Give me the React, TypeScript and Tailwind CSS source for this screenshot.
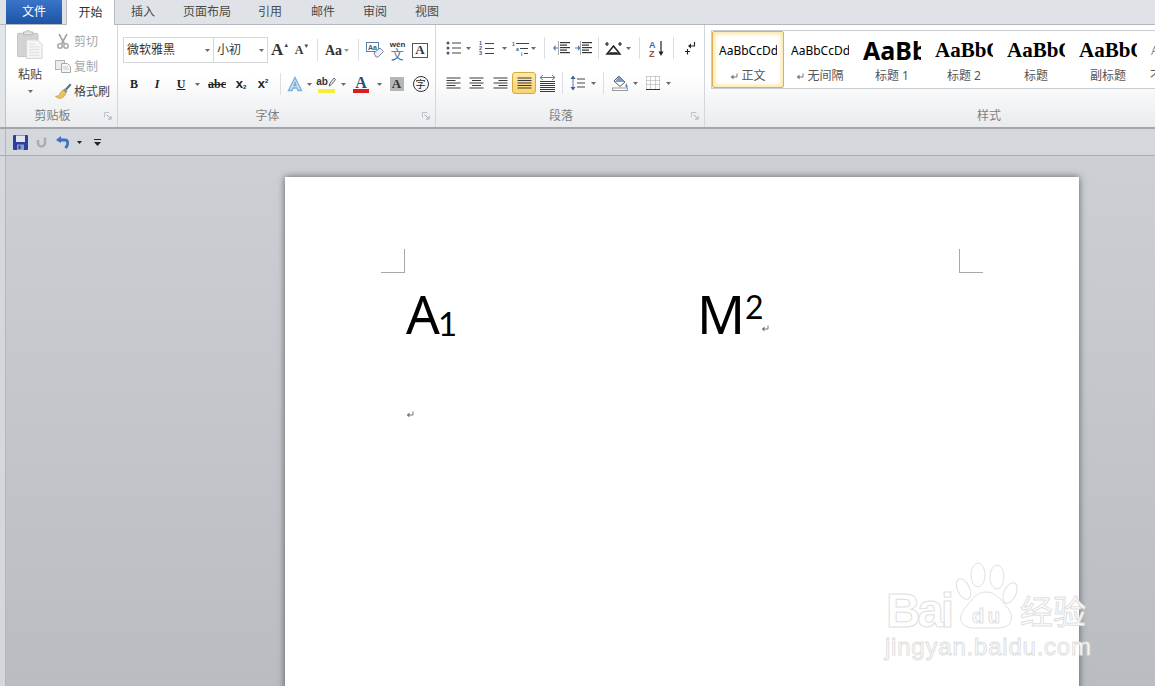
import React from "react";

// small dropdown arrow used all over the ribbon
const Caret = ({ c = "#6b6b6b" }: { c?: string }) => (
  <svg width="5" height="3" viewBox="0 0 5 3">
    <path d="M0 0h5L2.5 3z" fill={c} />
  </svg>
);

const Cell = ({ c, children }: { c: string; children?: React.ReactNode }) => (
  <div className={`flex shrink-0 h-full items-center justify-center ${c}`}>{children}</div>
);

const Dd = ({ c, color }: { c: string; color?: string }) => (
  <Cell c={c}>
    <Caret c={color} />
  </Cell>
);

const Sep = ({ c }: { c: string }) => (
  <Cell c={c}>
    <div className="w-px h-[22px] bg-[#dcdee1]" />
  </Cell>
);

const Launcher = () => (
  <svg width="8" height="8" viewBox="0 0 9 9">
    <path d="M.5 6V.5H6" fill="none" stroke="#b5b8bc" />
    <path d="M3 3l4 4M8 4.5V8H4.5" fill="none" stroke="#9aa5b3" />
  </svg>
);

// paragraph mark, the formatting symbol word shows at line ends
const ReturnMark = () => (
  <svg className="inline-block" width="8" height="7" viewBox="0 0 8 7">
    <path d="M7 .5V4H1.500" fill="none" stroke="#777" />
    <path d="M3.500 1.500L.8 4l2.700 2.500z" fill="#777" />
  </svg>
);

const Group = ({ label, c, row, children }: { label: string; c: string; row?: string; children: React.ReactNode }) => (
  <div className={`flex flex-col shrink-0 h-full border-r border-[#d3d6da] ${c}`}>
    <div className={`flex-1 min-h-0 ${row ?? ""}`}>{children}</div>
    <div className="flex items-center h-[24px] pt-[1px] text-[12px] text-[#7d7f82]">
      <div className="flex-1 text-center">{label}</div>
      <div className="w-[18px] flex justify-center">{label === "样式" ? null : <Launcher />}</div>
    </div>
  </div>
);

const Lines = ({ kind }: { kind: "l" | "c" | "r" | "j" | "d" }) => {
  const rows = [1, 3.5, 6, 8.5, 11];
  const w = (i: number) => (kind === "j" || kind === "d" ? 14 : i % 2 ? 9 : 14);
  const x = (i: number) => {
    if (kind === "l" || kind === "j" || kind === "d") return 0;
    if (kind === "c") return (14 - w(i)) / 2;
    return 14 - w(i);
  };
  return (
    <svg width="15" height="12" viewBox="0 0 15 12">
      {rows.map((y, i) => (
        <rect key={y} x={x(i) + 0.5} y={y - 0.5} width={w(i)} height="1" fill="#3a3a3a" />
      ))}
    </svg>
  );
};

const Bullets = () => (
  <svg width="15" height="14" viewBox="0 0 15 14">
    {[2, 7, 12].map((y) => (
      <g key={y}>
        <circle cx="2" cy={y} r="1.5" fill="#46566b" />
        <rect x="6" y={y - 0.5} width="9" height="1" fill="#444" />
      </g>
    ))}
  </svg>
);

const Numbers = () => (
  <svg width="15" height="15" viewBox="0 0 15 15">
    {[1, 6, 11].map((y, i) => (
      <g key={y}>
        <text x="0" y={y + 3} fontSize="5.5" fontWeight="700" fill="#3d5a80" fontFamily="Liberation Sans">
          {i + 1}
        </text>
        <rect x="6" y={y + 1} width="9" height="1" fill="#444" />
      </g>
    ))}
  </svg>
);

const Multi = () => (
  <svg width="18" height="15" viewBox="0 0 18 15">
    <text x="0" y="5" fontSize="5" fontWeight="700" fill="#3d5a80" fontFamily="Liberation Sans">1</text>
    <text x="4" y="10" fontSize="5" fontWeight="700" fill="#3d5a80" fontFamily="Liberation Sans">a</text>
    <text x="9" y="15" fontSize="5" fontWeight="700" fill="#3d5a80" fontFamily="Liberation Sans">i</text>
    <rect x="4" y="2" width="13" height="1" fill="#444" />
    <rect x="8" y="7" width="8" height="1" fill="#444" />
    <rect x="12" y="12" width="4" height="1" fill="#444" />
  </svg>
);

const Indent = ({ right }: { right?: boolean }) => (
  <svg width="17" height="14" viewBox="0 0 17 14">
    {[1, 3.5, 6, 8.5, 11].map((y) => (
      <rect key={y} x="7" y={y} width={y === 3.5 || y === 8.5 ? 7 : 10} height="1.2" fill="#333" />
    ))}
    <rect x="5" y="0" width="1" height="14" fill="#aaa" />
    {right ? (
      <path d="M0 6.500h3V4l2.500 3L3 10V7.500H0z" fill="#4d7fb8" />
    ) : (
      <path d="M5 6.500H2.500V4L0 7l2.500 3V7.500H5z" fill="#4d7fb8" />
    )}
  </svg>
);

const Para = () => (
  <svg width="17" height="14" viewBox="0 0 17 14">
    <path d="M2 13L8.500 5 15 13zM4.500 12h8" fill="none" stroke="#222" strokeWidth="1.500" />
    <path d="M0 3h4M2 1v4M13 3h4M15 1v4" stroke="#222" strokeWidth="1.200" />
  </svg>
);

const Sort = () => (
  <svg width="16" height="17" viewBox="0 0 16 17">
    <text x="0" y="8" fontSize="9" fontWeight="700" fill="#3a6ea5" fontFamily="Liberation Sans">A</text>
    <text x="0" y="16.500" fontSize="9" fontWeight="700" fill="#a04a45" fontFamily="Liberation Sans">Z</text>
    <path d="M12 1v13" stroke="#222" strokeWidth="1.200" />
    <path d="M9.500 11.500L12 16l2.500-4.500z" fill="#222" />
  </svg>
);

const Pilcrow = () => (
  <svg width="11" height="14" viewBox="0 0 11 14">
    <path d="M9.500 1v4H5" fill="none" stroke="#222" strokeWidth="1.100" />
    <path d="M6 2.500L3 5l3 2.500z" fill="#222" />
    <path d="M0 10.500h5M2.500 8v5.500" stroke="#222" strokeWidth="1.100" />
  </svg>
);

const Spacing = () => (
  <svg width="16" height="16" viewBox="0 0 16 16">
    <path d="M3 3v10" stroke="#4d7fb8" />
    <path d="M0.500 4L3 0.500 5.500 4zM0.500 12L3 15.500 5.500 12z" fill="#3d5f8a" />
    <path d="M7 4h8M7 8h8M7 12h8" stroke="#444" />
  </svg>
);

const Fill = () => (
  <svg width="17" height="16" viewBox="0 0 17 16">
    <path d="M7 1l6 6-5 4.500L2 6z" fill="#fff" stroke="#555" />
    <path d="M7 1l6 6H3z" fill="#7a9cc6" />
    <path d="M14 8c1 2 2 3 1.500 4s-2 .5-2-1 .5-2 .5-3z" fill="#4d7fb8" />
    <rect x="0.500" y="13" width="15" height="2.500" fill="#fff" stroke="#9a9a9a" />
  </svg>
);

const Borders = () => (
  <svg width="14" height="14" viewBox="0 0 14 14">
    <path d="M.5.5h13M.5 4.500h13M.5 8.500h13M.5.5v13M4.500.5v13M9.500.5v13M13.500.5v13" stroke="#a5a5a5" strokeDasharray="1 1" fill="none" />
    <rect x="0" y="13" width="14" height="1" fill="#333" />
  </svg>
);

const PasteIcon = () => (
  <svg width="26" height="31" viewBox="0 0 28 31">
    <rect x="0.500" y="3.500" width="22" height="25" rx="1" fill="#d4d2d2" stroke="#c2c0c0" />
    <path d="M7 4V2h3l1-1.500h2L14 2h3v3H7z" fill="#e4e2e2" stroke="#b5b3b3" />
    <path d="M10 10.500h12l5 5V30.500H10z" fill="#f5f5f5" stroke="#cfcfcf" />
    <path d="M13 15h6M13 18h11M13 21h11M13 24h11M13 27h11" stroke="#dcdcdc" />
  </svg>
);

const Scissors = () => (
  <svg width="12" height="15" viewBox="0 0 12 15">
    <path d="M2 0l5.500 10M10 0L4.500 10" stroke="#a3a3a3" strokeWidth="1.600" />
    <circle cx="3" cy="12" r="2.200" fill="none" stroke="#a8a8a8" strokeWidth="1.500" />
    <circle cx="9" cy="12" r="2.200" fill="none" stroke="#a8a8a8" strokeWidth="1.500" />
  </svg>
);

const CopyIcon = () => (
  <svg width="16" height="13" viewBox="0 0 16 13">
    <rect x="0.500" y="0.500" width="9" height="9" fill="#ececec" stroke="#b5b5b5" />
    <path d="M6.500 3.500h6l3 3v6h-9z" fill="#f6f6f6" stroke="#aaa" />
    <path d="M8 7h5M8 9h6" stroke="#c9c9c9" />
  </svg>
);

const Brush = () => (
  <svg width="17" height="16" viewBox="0 0 17 16">
    <path d="M10 6l5-5.500 1.500 1.500L11.500 7.500z" fill="#5d6f86" />
    <path d="M9.500 5.500l3 3-1.500 1.500-3-3z" fill="#8d8d8d" />
    <path d="M8 7l3 3c-1 3-3 5-6 5.500-1.500 0-4-1-4.500-2.500 2 .5 4-.5 4.500-2.500C5.500 9 7 7.500 8 7z" fill="#e7c25e" stroke="#b48e2d" strokeWidth="0.600" />
  </svg>
);

const ClearFormat = () => (
  <svg width="18" height="16" viewBox="0 0 18 16">
    <rect x="0.500" y="0.500" width="12" height="9" fill="#fff" stroke="#5f7ea3" />
    <text x="2" y="8" fontSize="7" fontWeight="700" fill="#3d5a80" fontFamily="Liberation Sans">Aa</text>
    <path d="M8 11l6-5 3.500 3.500-5.500 5.500h-2z" fill="#eef2f6" stroke="#7a8a9c" />
  </svg>
);

const Save = () => (
  <svg width="15" height="15" viewBox="0 0 15 15">
    <rect width="15" height="15" rx="1" fill="#2f3f9e" />
    <rect x="3" y="0.500" width="9" height="6.500" fill="#dfe6f2" />
    <rect x="4" y="9.500" width="7" height="5.500" fill="#8fa0c8" />
    <rect x="5.500" y="10.500" width="2" height="3.500" fill="#2f3f9e" />
  </svg>
);

const RedoGrey = () => (
  <svg width="12" height="12" viewBox="0 0 12 12">
    <path d="M9 1.500v5.500a3.500 3.500 0 0 1-7 0V4" fill="none" stroke="#a9adb1" strokeWidth="2.500" />
  </svg>
);

const Undo = () => (
  <svg width="14" height="13" viewBox="0 0 14 13">
    <path d="M2.500 4H9c3 0 4 4 .5 8" fill="none" stroke="#3f6fc0" strokeWidth="2.800" />
    <path d="M0 4l5-4v7z" fill="#3f6fc0" />
  </svg>
);

const Customize = () => (
  <svg width="7" height="7" viewBox="0 0 7 7">
    <rect x="0" y="0" width="7" height="1" fill="#222" />
    <path d="M0 3h7L3.500 7z" fill="#222" />
  </svg>
);

const styles = [
  { sample: "AaBbCcDd", label: "正文", mark: true, s: "text-[12px] text-black font-['Noto_Sans']" },
  { sample: "AaBbCcDd", label: "无间隔", mark: true, s: "text-[12px] text-black font-['Noto_Sans']" },
  { sample: "AaBbCcDd", label: "标题 1", s: "text-[25px] font-bold text-black font-['Noto_Sans']" },
  { sample: "AaBbCcDd", label: "标题 2", s: "text-[21px] font-bold text-black font-['Liberation_Serif']" },
  { sample: "AaBbCcDd", label: "标题", s: "text-[21px] font-bold text-black font-['Liberation_Serif']" },
  { sample: "AaBbCcDd", label: "副标题", s: "text-[21px] font-bold text-black font-['Liberation_Serif']" },
  { sample: "AaBbCcDd", label: "不明显强调", s: "text-[12px] text-[#888] font-['Noto_Sans']" },
];

const tabs = [
  ["插入", "w-[50px]"],
  ["页面布局", "w-[78px]"],
  ["引用", "w-[48px]"],
  ["邮件", "w-[58px]"],
  ["审阅", "w-[46px]"],
  ["视图", "w-[58px]"],
];

export default function App() {
  return (
    <div className="w-[1155px] h-[686px] overflow-hidden relative flex flex-col bg-[#c3c6ca] font-['Noto_Sans','Noto_Sans_CJK_SC',sans-serif]">
      {/* tab strip */}
      <div className="h-[25px] shrink-0 flex items-stretch pl-[6px] bg-[#dfe3e7] border-b border-[#b4b8bd] text-[12px] text-[#4a4a4a]">
        <div className="w-[56px] h-[24px] flex items-center justify-center text-white bg-gradient-to-b from-[#3a74c8] to-[#1d55a5]">文件</div>
        <div className="w-[4px]" />
        <div className="w-[49px] h-[25px] flex items-center justify-center bg-white border-x border-[#b9bdc2] text-[#333] z-10">开始</div>
        <div className="flex items-center pl-[3px]">
          {tabs.map(([t, w]) => (
            <div key={t} className={`text-center ${w}`}>{t}</div>
          ))}
        </div>
      </div>

      {/* ribbon */}
      <div className="h-[104px] shrink-0 pl-[5px] bg-[#e3e6e9] border-b-2 border-[#a3a6aa]">
        <div className="h-full flex overflow-hidden border-l border-[#bfc3c7] bg-gradient-to-b from-white from-50% to-[#e9ebee]">
          <Group label="剪贴板" c="w-[112px]" row="flex">
            <div className="w-[48px] flex flex-col items-center pt-[4px] text-[12px] text-[#444]">
              <PasteIcon />
              <div className="mt-[7px] leading-[16px]">粘贴</div>
              <div className="mt-[7px] leading-none"><Caret /></div>
            </div>
            <div className="flex-1 flex flex-col pt-[6px] text-[12px] leading-[25px] text-[#a5a7a9]">
              <div className="flex items-center h-[20px]"><Cell c="w-[18px] mr-[2px]"><Scissors /></Cell>剪切</div>
              <div className="flex items-center h-[20px] mt-[5px]"><Cell c="w-[18px] mr-[2px]"><CopyIcon /></Cell>复制</div>
              <div className="flex items-center h-[20px] mt-[5px] text-[#444]"><Cell c="w-[18px] mr-[2px]"><Brush /></Cell>格式刷</div>
            </div>
          </Group>

          <Group label="字体" c="w-[318px]" row="pl-[5px]">
            <div className="flex h-[26px] mt-[12px]">
              <div className="w-[91px] h-full flex items-center justify-between px-[3px] border border-[#d4d6d9] bg-white text-[12px] text-[#333]">
                <span>微软雅黑</span>
                <Caret />
              </div>
              <div className="w-[54px] h-full flex items-center justify-between px-[3px] border border-l-0 border-[#d4d6d9] bg-white text-[12px] text-[#333]">
                <span>小初</span>
                <Caret />
              </div>
              <Cell c="w-[24px] font-['Liberation_Serif'] font-bold text-[17px] text-[#333]">
                A<span className="text-[6px] text-[#445] -mt-[9px]">▲</span>
              </Cell>
              <Cell c="w-[20px] font-['Liberation_Serif'] font-bold text-[12px] text-[#333]">
                A<span className="text-[6px] text-[#445] -mt-[8px]">▼</span>
              </Cell>
              <Sep c="w-[10px]" />
              <Cell c="w-[30px] gap-[2px] font-['Liberation_Serif'] font-bold text-[14px] text-[#333]">
                Aa<Caret c="#999" />
              </Cell>
              <Sep c="w-[12px]" />
              <Cell c="w-[22px]"><ClearFormat /></Cell>
              <Cell c="w-[23px]">
                <div className="flex flex-col items-center leading-none font-['Liberation_Sans'] text-[8px] font-bold text-[#333]">
                  wén
                  <span className="text-[13px] leading-[11px] font-normal text-[#3d6ea5]">文</span>
                </div>
              </Cell>
              <Cell c="w-[22px]">
                <div className="w-[16px] h-[15px] border border-[#555] flex items-center justify-center font-['Liberation_Serif'] font-bold text-[13px] text-[#333]">A</div>
              </Cell>
            </div>
            <div className="flex h-[26px] mt-[8px] text-[#222]">
              <Cell c="w-[22px] font-['Liberation_Serif'] font-bold text-[12px]">B</Cell>
              <Cell c="w-[24px] font-['Liberation_Serif'] font-bold italic text-[12px]">I</Cell>
              <Cell c="w-[24px] font-['Liberation_Serif'] font-bold underline text-[12px]">U</Cell>
              <Dd c="w-[9px]" />
              <Cell c="w-[30px] font-['Liberation_Serif'] font-bold line-through text-[12px]">abc</Cell>
              <Cell c="w-[18px] font-['Liberation_Sans'] font-bold text-[13px]">x<span className="text-[6px] mt-[6px]">2</span></Cell>
              <Cell c="w-[26px] font-['Liberation_Sans'] font-bold text-[13px]">x<span className="text-[6px] -mt-[6px]">2</span></Cell>
              <Sep c="w-[8px]" />
              <Cell c="w-[22px]">
                <svg width="16" height="16" viewBox="0 0 16 16">
                  <path d="M8 1.500L1.500 14.500h3.500l1-2.500h4l1 2.500h3.500zM8 6.500L9 9.500H7z" fill="#cfe3f5" stroke="#79aedb" strokeWidth="1.300" />
                </svg>
              </Cell>
              <Dd c="w-[6px]" />
              <Cell c="w-[28px]">
                <div className="flex flex-col items-center w-[18px]">
                  <div className="flex items-center h-[13px] leading-none font-['Liberation_Sans'] text-[10px] font-bold text-[#333]">
                    ab
                    <svg width="8" height="10" viewBox="0 0 8 10"><path d="M1 9l1-3 4-5 1.500 1.500-4 5z" fill="#eee" stroke="#666" /></svg>
                  </div>
                  <div className="w-[17px] h-[4px] bg-[#f7ee3b]" />
                </div>
              </Cell>
              <Dd c="w-[6px]" />
              <Cell c="w-[30px]">
                <div className="flex flex-col items-center">
                  <span className="leading-[13px] font-['Liberation_Serif'] font-bold text-[16px] text-[#2c4a77]">A</span>
                  <div className="w-[16px] h-[4px] bg-[#d81e1e]" />
                </div>
              </Cell>
              <Dd c="w-[6px]" />
              <Cell c="w-[29px]">
                <div className="w-[14px] h-[14px] bg-[#b4b6b8] flex items-center justify-center font-['Liberation_Serif'] font-bold text-[13px] text-[#333]">A</div>
              </Cell>
              <Cell c="w-[19px]">
                <div className="w-[16px] h-[16px] rounded-full border border-[#333] flex items-center justify-center text-[10px] text-[#222]">字</div>
              </Cell>
            </div>
          </Group>

          <Group label="段落" c="w-[269px]" row="pl-[5px]">
            <div className="flex h-[26px] mt-[10px]">
              <Cell c="w-[24px]"><Bullets /></Cell>
              <Dd c="w-[6px]" />
              <Cell c="w-[30px]"><Numbers /></Cell>
              <Dd c="w-[6px]" />
              <Cell c="w-[23px] !justify-end"><Multi /></Cell>
              <Dd c="w-[7px]" />
              <Sep c="w-[14px]" />
              <Cell c="w-[20px]"><Indent /></Cell>
              <Cell c="w-[24px]"><Indent right /></Cell>
              <Sep c="w-[6px]" />
              <Cell c="w-[24px]"><Para /></Cell>
              <Dd c="w-[6px]" />
              <Sep c="w-[16px]" />
              <Cell c="w-[20px]"><Sort /></Cell>
              <Sep c="w-[12px]" />
              <Cell c="w-[22px]"><Pilcrow /></Cell>
            </div>
            <div className="flex h-[22px] mt-[11px]">
              <Cell c="w-[24px]"><Lines kind="l" /></Cell>
              <Cell c="w-[23px]"><Lines kind="c" /></Cell>
              <Cell c="w-[24px]"><Lines kind="r" /></Cell>
              <Cell c="w-[24px] rounded-[3px] border border-[#d9a941] bg-gradient-to-b from-[#fde9a8] to-[#fbd26f]"><Lines kind="j" /></Cell>
              <Cell c="w-[22px]">
                <div className="flex flex-col items-center gap-[1px]">
                  <svg width="15" height="5" viewBox="0 0 15 5"><path d="M0 2.500h15M3 0L0 2.500 3 5M12 0l3 2.500L12 5" fill="none" stroke="#4d7fb8" /></svg>
                  <svg width="15" height="11" viewBox="0 0 15 11">
                    {[0.500, 2.500, 4.500, 6.500, 8.500, 10.500].map((y) => <rect key={y} x="0" y={y - 0.500} width="15" height="1" fill="#3a3a3a" />)}
                  </svg>
                </div>
              </Cell>
              <Sep c="w-[8px]" />
              <Cell c="w-[24px]"><Spacing /></Cell>
              <Dd c="w-[6px]" />
              <Sep c="w-[14px]" />
              <Cell c="w-[20px]"><Fill /></Cell>
              <Dd c="w-[10px]" />
              <Cell c="w-[25px]"><Borders /></Cell>
              <Dd c="w-[6px]" />
            </div>
          </Group>

          <Group label="样式" c="w-[586px] border-r-0" row="pl-[6px] pt-[5px]">
            <div className="flex h-[59px] bg-white border border-[#c9ccd0]">
              {styles.map((st, i) => (
                <div
                  key={st.label}
                  className={
                    i === 0
                      ? "w-[72px] h-[57px] shrink-0 flex flex-col items-center pt-[3px] rounded-[2px] border border-[#dcb055] shadow-[inset_0_0_4px_2px_#fbe7a6] bg-white"
                      : "w-[72px] h-[57px] shrink-0 flex flex-col items-center pt-[3px] border border-transparent"
                  }
                >
                  <div className={`w-[58px] h-[32px] overflow-hidden whitespace-nowrap flex items-center ${st.s}`}>{st.sample}</div>
                  <div className="text-[12px] leading-[18px] text-[#555] whitespace-nowrap">
                    {st.mark && <span className="mr-[3px]"><ReturnMark /></span>}
                    {st.label}
                  </div>
                </div>
              ))}
            </div>
          </Group>
        </div>
      </div>

      {/* quick access toolbar */}
      <div className="h-[27px] shrink-0 pl-[5px] bg-[#d4d7db] border-b border-[#a9adb1]">
        <div className="h-full flex items-center border-l border-[#b3b7bb]">
          <Cell c="w-[27px] pl-px"><Save /></Cell>
          <Cell c="w-[17px]"><RedoGrey /></Cell>
          <Cell c="w-[26px]"><Undo /></Cell>
          <Dd c="w-[6px]" color="#222" />
          <Cell c="w-[30px]"><Customize /></Cell>
        </div>
      </div>

      {/* document area */}
      <div className="flex-1 min-h-0 pl-[5px] bg-[#d4d7db]">
        <div className="h-full pl-[279px] pt-[21px] border-l border-[#b3b7bb] bg-gradient-to-b from-[#ccd0d4] to-[#b9bcc1]">
          <div className="w-[794px] h-[600px] bg-white shadow-[0_0_7px_rgba(0,0,0,0.55)] pt-[72px] px-[96px]">
            <div className="flex justify-between h-[24px]">
              <div className="w-[24px] h-[24px] border-r border-b border-[#a8a8a8]" />
              <div className="w-[24px] h-[24px] border-l border-b border-[#a8a8a8]" />
            </div>
            <div className="flex pl-[25px] mt-[6px] h-[70px] leading-[70px] text-[53px] text-black">
              <div className="w-[291px] whitespace-nowrap">
                A<span className="font-['Lato'] text-[33px] leading-[0] align-[-2px] -ml-[2px]">1</span>
              </div>
              <div className="whitespace-nowrap">
                M<span className="font-['Lato'] text-[32px] leading-[0] align-[15px]">2</span>
                <span className="leading-[0] -ml-[3px] align-[-9px]"><ReturnMark /></span>
              </div>
            </div>
            <div className="pl-[25px] mt-[57px] leading-[14px]"><ReturnMark /></div>
          </div>
        </div>
      </div>

      {/* baidu watermark */}
      <svg className="absolute left-[880px] top-[555px]" width="220" height="115" viewBox="0 0 220 115">
        <g fill="#fff" stroke="#e0e0e0" strokeWidth="1">
          <text x="6" y="72" fontSize="48" fontWeight="700" fontFamily="Liberation Sans" textLength="68" fill="none">Bai</text>
          <ellipse cx="98" cy="20" rx="7" ry="12" fill="none" />
          <ellipse cx="117" cy="22" rx="7" ry="12" fill="none" />
          <ellipse cx="83.500" cy="34" rx="6" ry="11" transform="rotate(-25 83.500 34)" fill="none" />
          <ellipse cx="130" cy="38" rx="6" ry="11" transform="rotate(25 130 38)" fill="none" />
          <path d="M106 37c10 0 15 8 20 14 6 7 7 12 4 17-4 6-12 5-24 5-12 0-20 1-24-5-3-5-1-10 4-16 6-7 10-15 20-15z" fill="none" />
          <text x="92" y="68" fontSize="20" fontWeight="700" fontFamily="Liberation Sans" textLength="28" fill="none">du</text>
          <text x="140" y="69" fontSize="33" fontFamily="Noto Sans CJK SC">经验</text>
          <text x="5" y="100" fontSize="24" fontFamily="Liberation Sans" textLength="206">jingyan.baidu.com</text>
        </g>
      </svg>
    </div>
  );
}
